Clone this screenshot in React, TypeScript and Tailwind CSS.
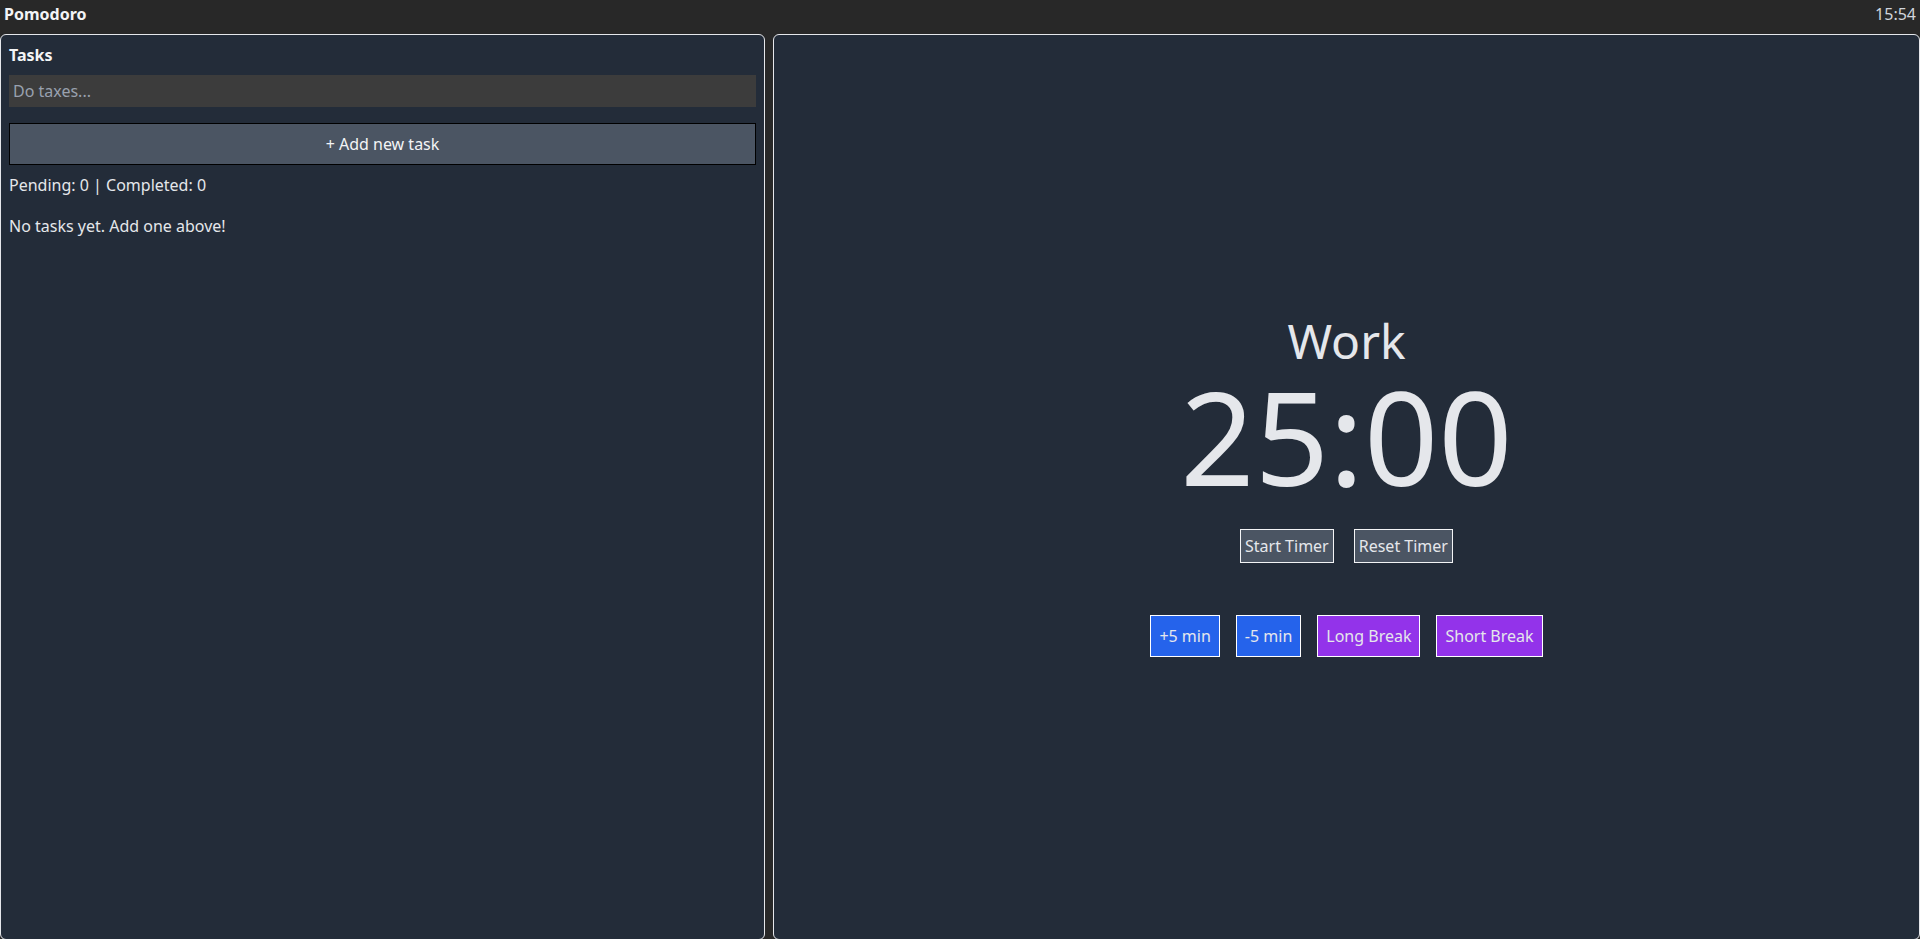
import { useState } from "react";

export default function App() {
  const [task, setTask] = useState("");
  const [tasks, setTasks] = useState<{ id: number; text: string; done: boolean }[]>([]);
  const [seconds, setSeconds] = useState(25 * 60);
  const [mode, setMode] = useState("Work");

  const pending = tasks.filter((t) => !t.done).length;
  const completed = tasks.filter((t) => t.done).length;

  const mm = String(Math.floor(seconds / 60)).padStart(2, "0");
  const ss = String(seconds % 60).padStart(2, "0");

  const addTask = () => {
    if (!task.trim()) return;
    setTasks([...tasks, { id: Date.now(), text: task.trim(), done: false }]);
    setTask("");
  };

  return (
    <div className="w-full h-[939px] overflow-hidden bg-[#282828] text-gray-200 font-['Noto_Sans',sans-serif] flex flex-col">
      {/* Top bar */}
      <div className="h-[34px] shrink-0 flex justify-between px-1 pt-0.5 text-base leading-6">
        <div className="font-bold text-gray-100">Pomodoro</div>
        <div className="text-gray-300">15:54</div>
      </div>

      <div className="flex gap-2 h-[906px] shrink-0">
        {/* Tasks panel */}
        <div className="w-[765px] shrink-0 bg-[#232c39] border border-gray-200 rounded-md p-2 flex flex-col">
          <h2 className="font-bold text-base leading-6 text-gray-100">Tasks</h2>
          <input
            type="text"
            value={task}
            onChange={(e) => setTask(e.target.value)}
            placeholder="Do taxes..."
            className="mt-2 h-8 w-full bg-[#3c3c3c] px-1 text-base text-gray-200 outline-none placeholder:text-gray-400"
          />
          <button
            onClick={addTask}
            className="mt-4 h-[42px] w-full bg-[#4b5563] border border-black text-base text-gray-100"
          >
            + Add new task
          </button>
          <p className="mt-2 text-base leading-6">
            Pending: {pending} | Completed: {completed}
          </p>
          {tasks.length === 0 ? (
            <p className="mt-[17px] text-base leading-6">No tasks yet. Add one above!</p>
          ) : (
            <ul className="mt-4 flex flex-col gap-1">
              {tasks.map((t) => (
                <li key={t.id}>{t.text}</li>
              ))}
            </ul>
          )}
        </div>

        {/* Timer panel */}
        <div className="flex-1 bg-[#232c39] border border-gray-200 rounded-md flex flex-col items-center justify-center">
          <div className="text-5xl leading-none text-gray-200">{mode}</div>
          <div className="mt-1.5 text-[130px] leading-none text-gray-200">
            {mm}:{ss}
          </div>
          <div className="mt-[28px] flex gap-5">
            <button className="bg-[#4b5563] border border-gray-100 px-1 py-1 text-base leading-6 text-gray-200">
              Start Timer
            </button>
            <button
              onClick={() => setSeconds(25 * 60)}
              className="bg-[#4b5563] border border-gray-100 px-1 py-1 text-base leading-6 text-gray-200"
            >
              Reset Timer
            </button>
          </div>
          <div className="mt-[52px] flex gap-4">
            <button
              onClick={() => setSeconds(seconds + 300)}
              className="bg-[#2563eb] border border-white px-2 py-2 text-base leading-6 text-gray-200"
            >
              +5 min
            </button>
            <button
              onClick={() => setSeconds(Math.max(0, seconds - 300))}
              className="bg-[#2563eb] border border-white px-2 py-2 text-base leading-6 text-gray-200"
            >
              -5 min
            </button>
            <button
              onClick={() => { setMode("Long Break"); setSeconds(15 * 60); }}
              className="bg-[#9333ea] border border-white px-2 py-2 text-base leading-6 text-gray-200"
            >
              Long Break
            </button>
            <button
              onClick={() => { setMode("Short Break"); setSeconds(5 * 60); }}
              className="bg-[#9333ea] border border-white px-2 py-2 text-base leading-6 text-gray-200"
            >
              Short Break
            </button>
          </div>
        </div>
      </div>
    </div>
  );
}
